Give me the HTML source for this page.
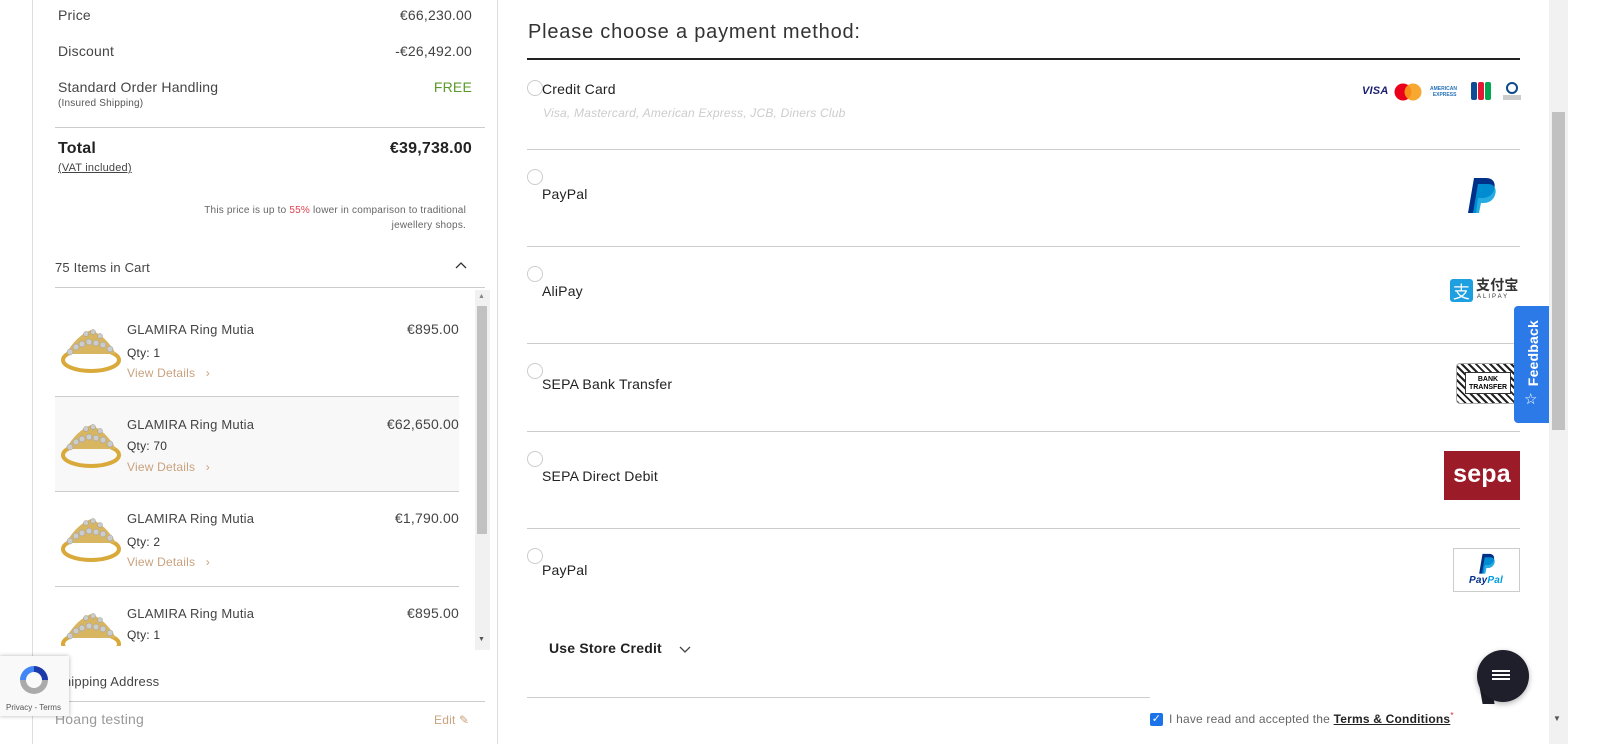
<!DOCTYPE html>
<html><head><meta charset="utf-8"><style>
*{margin:0;padding:0;box-sizing:border-box}
body{width:1600px;height:744px;overflow:hidden;background:#fff;font-family:"Liberation Sans",sans-serif;color:#333;position:relative;letter-spacing:.2px}
.a{position:absolute;white-space:nowrap}
.hl{position:absolute;height:1px;background:#ccc}
.r{text-align:right}
.radio{position:absolute;width:16px;height:16px;border:1px solid #ccc;border-radius:50%;background:#fff}
.ring{position:absolute;width:62px;height:56px}
</style></head><body>
<div class="a" style="left:32px;top:0;width:1px;height:744px;background:#ddd"></div>
<div class="a" style="left:497px;top:0;width:1px;height:744px;background:#ddd"></div>

<div class="a" style="left:58px;top:7px;font-size:14px;color:#444">Price</div>
<div class="a r" style="right:1128px;top:7px;font-size:14px;color:#444">€66,230.00</div>
<div class="a" style="left:58px;top:43px;font-size:14px;color:#444">Discount</div>
<div class="a r" style="right:1128px;top:43px;font-size:14px;color:#444">-€26,492.00</div>
<div class="a" style="left:58px;top:79px;font-size:14px;color:#444">Standard Order Handling</div>
<div class="a" style="left:58px;top:98px;font-size:10px;color:#555">(Insured Shipping)</div>
<div class="a r" style="right:1128px;top:79px;font-size:14px;color:#5a9a2a">FREE</div>
<div class="hl" style="left:55px;top:127px;width:430px"></div>
<div class="a" style="left:58px;top:140px;font-size:16px;font-weight:bold;color:#222">Total</div>
<div class="a r" style="right:1128px;top:140px;font-size:16px;font-weight:bold;color:#222">€39,738.00</div>
<div class="a" style="left:58px;top:162px;font-size:11px;color:#444;text-decoration:underline">(VAT included)</div>
<div class="a r" style="right:1134px;top:203px;font-size:10px;color:#666;line-height:15px;text-align:right">This price is up to <span style="color:#e04050">55%</span> lower in comparison to traditional<br>jewellery shops.</div>
<div class="a" style="left:55px;top:260px;font-size:13px;color:#444">75 Items in Cart</div>
<svg class="a" style="left:455px;top:262px" width="12" height="8"><path d="M1 6 L6 1 L11 6" stroke="#333" stroke-width="1.3" fill="none"/></svg>
<div class="hl" style="left:55px;top:287px;width:430px"></div>

<div class="a" style="left:475px;top:290px;width:15px;height:360px;background:#f1f1f1"></div>
<div class="a" style="left:477px;top:306px;width:10px;height:228px;background:#c1c1c1"></div>
<div class="a" style="left:478px;top:293px;font-size:7px;color:#888">▲</div>
<div class="a" style="left:478px;top:636px;font-size:7px;color:#555">▼</div>
<div class="a" style="left:55px;top:397px;width:404px;height:94px;background:#f8f8f8"></div>
<div class="hl" style="left:55px;top:396px;width:404px"></div>
<div class="hl" style="left:55px;top:491px;width:404px"></div>
<div class="hl" style="left:55px;top:586px;width:404px"></div>

<svg width="0" height="0" style="position:absolute"><defs><g id="rg">
<ellipse cx="31" cy="40" rx="28" ry="11" fill="none" stroke="#d9a93a" stroke-width="4"/>
<path d="M6 34 Q16 16 31 10 Q46 16 56 34 Z" fill="#d8b560"/>
<g fill="#ccc" stroke="#999" stroke-width=".5"><circle cx="10" cy="32" r="3"/><circle cx="16" cy="27" r="3"/><circle cx="22" cy="24" r="3"/><circle cx="29" cy="22" r="3"/><circle cx="36" cy="23" r="3"/><circle cx="43" cy="25" r="3"/><circle cx="50" cy="29" r="3"/><circle cx="26" cy="14" r="2.5"/><circle cx="33" cy="12" r="2.5"/><circle cx="40" cy="16" r="2.5"/></g>
</g></defs></svg>
<svg class="ring" style="left:60px;top:320px"><use href="#rg"/></svg>
<svg class="ring" style="left:60px;top:415px"><use href="#rg"/></svg>
<svg class="ring" style="left:60px;top:509px"><use href="#rg"/></svg>
<svg class="ring" style="left:60px;top:604px;height:42px"><use href="#rg"/></svg>

<div class="a" style="left:127px;top:322px;font-size:13px;color:#444">GLAMIRA Ring Mutia</div>
<div class="a r" style="right:1141px;top:321px;font-size:14px;color:#444">€895.00</div>
<div class="a" style="left:127px;top:346px;font-size:12px;color:#333">Qty: 1</div>
<div class="a" style="left:127px;top:366px;font-size:12px;color:#c9a27e">View Details &nbsp;&nbsp;›</div>

<div class="a" style="left:127px;top:417px;font-size:13px;color:#444">GLAMIRA Ring Mutia</div>
<div class="a r" style="right:1141px;top:416px;font-size:14px;color:#444">€62,650.00</div>
<div class="a" style="left:127px;top:439px;font-size:12px;color:#333">Qty: 70</div>
<div class="a" style="left:127px;top:460px;font-size:12px;color:#c9a27e">View Details &nbsp;&nbsp;›</div>

<div class="a" style="left:127px;top:511px;font-size:13px;color:#444">GLAMIRA Ring Mutia</div>
<div class="a r" style="right:1141px;top:510px;font-size:14px;color:#444">€1,790.00</div>
<div class="a" style="left:127px;top:535px;font-size:12px;color:#333">Qty: 2</div>
<div class="a" style="left:127px;top:555px;font-size:12px;color:#c9a27e">View Details &nbsp;&nbsp;›</div>

<div class="a" style="left:127px;top:606px;font-size:13px;color:#444">GLAMIRA Ring Mutia</div>
<div class="a r" style="right:1141px;top:605px;font-size:14px;color:#444">€895.00</div>
<div class="a" style="left:127px;top:628px;font-size:12px;color:#333">Qty: 1</div>

<div class="a" style="left:55px;top:674px;font-size:13px;color:#444">Shipping Address</div>
<div class="hl" style="left:55px;top:701px;width:430px"></div>
<div class="a" style="left:55px;top:711px;font-size:14px;color:#999">Hoang testing</div>
<div class="a" style="left:434px;top:713px;font-size:12px;color:#c9a27e">Edit ✎</div>

<div class="a" style="left:0;top:656px;width:69px;height:60px;background:#f9f9f9;box-shadow:0 0 4px rgba(0,0,0,.3)">
<svg style="position:absolute;left:16px;top:6px" width="36" height="36" viewBox="0 0 36 36"><path d="M18 4 A14 14 0 0 1 32 18 L26 18 A8 8 0 0 0 18 10Z" fill="#1c3aa9"/><path d="M4 18 A14 14 0 0 1 18 4 L18 10 A8 8 0 0 0 10 18Z" fill="#4285f4"/><path d="M18 32 A14 14 0 0 1 4 18 L10 18 A8 8 0 0 0 18 26Z" fill="#aaa"/><path d="M32 18 A14 14 0 0 1 18 32 L18 26 A8 8 0 0 0 26 18Z" fill="#ababab"/></svg>
<div style="position:absolute;left:6px;top:47px;font-size:8px;color:#555;letter-spacing:0">Privacy - Terms</div></div>

<div class="a" style="left:528px;top:21px;font-size:20px;color:#333;letter-spacing:.8px">Please choose a payment method:</div>
<div class="a" style="left:527px;top:58px;width:993px;height:2px;background:#222"></div>

<div class="radio" style="left:527px;top:80px"></div>
<div class="a" style="left:542px;top:81px;font-size:14px;color:#222">Credit Card</div>
<div class="a" style="left:543px;top:106px;font-size:12px;color:#ccc;font-style:italic">Visa, Mastercard, American Express, JCB, Diners Club</div>
<div class="a" style="left:1362px;top:85px;font-size:11px;font-weight:bold;font-style:italic;color:#1a1f71">VISA</div>
<svg class="a" style="left:1394px;top:83px" width="28" height="18"><circle cx="9" cy="9" r="8.5" fill="#eb001b"/><circle cx="19" cy="9" r="8.5" fill="#f79e1b" opacity=".9"/></svg>
<div class="a" style="left:1430px;top:86px;font-size:5px;color:#2671b9;line-height:6px;font-weight:bold;letter-spacing:0">AMERICAN<br>&nbsp;&nbsp;EXPRESS</div>
<svg class="a" style="left:1471px;top:82px" width="20" height="18"><rect x="0" y="0" width="6" height="18" rx="2" fill="#0e4c96"/><rect x="7" y="0" width="6" height="18" rx="2" fill="#e21836"/><rect x="14" y="0" width="6" height="18" rx="2" fill="#00a650"/></svg>
<svg class="a" style="left:1503px;top:82px" width="18" height="20"><circle cx="9" cy="6" r="5" fill="none" stroke="#0a4a8c" stroke-width="2"/><rect x="0" y="13" width="18" height="5" fill="#ccc"/></svg>
<div class="hl" style="left:527px;top:149px;width:993px"></div>

<div class="radio" style="left:527px;top:169px"></div>
<div class="a" style="left:542px;top:186px;font-size:14px;color:#222">PayPal</div>
<svg class="a" style="left:1466px;top:178px" width="32" height="36" viewBox="0 0 32 36"><path d="M8 0 H20 C28 0 30 6 28 12 C26 18 21 20 16 20 H12 L10 35 H2Z" fill="#003087"/><path d="M12 6 H22 C29 6 31 12 29 17 C27 23 22 25 18 25 H15 L13 35 H7Z" fill="#009cde" opacity=".85"/></svg>
<div class="hl" style="left:527px;top:246px;width:993px"></div>

<div class="radio" style="left:527px;top:266px"></div>
<div class="a" style="left:542px;top:283px;font-size:14px;color:#222">AliPay</div>
<div class="a" style="left:1450px;top:279px;width:23px;height:23px;background:#1e9fe0;border-radius:3px;color:#fff;font-size:17px;text-align:center;line-height:23px;font-family:'Noto Sans CJK SC',sans-serif">支</div>
<div class="a" style="left:1476px;top:277px;font-size:14px;font-weight:bold;color:#333;font-family:'Noto Sans CJK SC',sans-serif;line-height:16px">支付宝</div>
<div class="a" style="left:1477px;top:294px;font-size:6px;color:#333;letter-spacing:2px">ALIPAY</div>
<div class="hl" style="left:527px;top:343px;width:993px"></div>

<div class="radio" style="left:527px;top:363px"></div>
<div class="a" style="left:542px;top:376px;font-size:14px;color:#222">SEPA Bank Transfer</div>
<div class="a" style="left:1456px;top:363px;width:64px;height:41px;border:1px solid #aaa;border-radius:4px;background:repeating-linear-gradient(45deg,#222 0 2px,#fff 2px 5px)"><div style="position:absolute;left:8px;top:8px;width:46px;height:22px;background:#fff;border:1px solid #333;font-size:7px;font-weight:bold;text-align:center;line-height:8px;padding-top:3px;color:#000;letter-spacing:0">BANK<br>TRANSFER</div></div>
<div class="hl" style="left:527px;top:431px;width:993px"></div>

<div class="radio" style="left:527px;top:451px"></div>
<div class="a" style="left:542px;top:468px;font-size:14px;color:#222">SEPA Direct Debit</div>
<div class="a" style="left:1444px;top:451px;width:76px;height:49px;background:#9b1b28;color:#fff;font-size:25px;font-weight:bold;text-align:center;line-height:46px">sepa</div>
<div class="hl" style="left:527px;top:528px;width:993px"></div>

<div class="radio" style="left:527px;top:548px"></div>
<div class="a" style="left:542px;top:562px;font-size:14px;color:#222">PayPal</div>
<div class="a" style="left:1453px;top:548px;width:67px;height:44px;border:1px solid #ccc;background:#fff">
<svg style="position:absolute;left:24px;top:4px" width="18" height="22" viewBox="0 0 32 36"><path d="M8 0 H20 C28 0 30 6 28 12 C26 18 21 20 16 20 H12 L10 35 H2Z" fill="#003087"/><path d="M12 6 H22 C29 6 31 12 29 17 C27 23 22 25 18 25 H15 L13 35 H7Z" fill="#009cde" opacity=".85"/></svg>
<div style="position:absolute;left:15px;top:26px;font-size:10px;font-weight:bold;font-style:italic;color:#003087">Pay<span style="color:#009cde">Pal</span></div></div>

<div class="a" style="left:549px;top:640px;font-size:14px;font-weight:bold;color:#222">Use Store Credit</div>
<svg class="a" style="left:679px;top:646px" width="12" height="8"><path d="M1 1 L6 6 L11 1" stroke="#444" stroke-width="1.3" fill="none"/></svg>
<div class="hl" style="left:527px;top:697px;width:623px"></div>

<div class="a" style="left:1150px;top:713px;width:13px;height:13px;background:#1a73e8;border-radius:2px;color:#fff;font-size:11px;line-height:13px;text-align:center">✓</div>
<div class="a" style="left:1169px;top:711px;font-size:12px;color:#666">I have read and accepted the <span style="color:#222;text-decoration:underline;font-weight:bold">Terms &amp; Conditions</span><sup style="color:#e02020;font-size:8px">*</sup></div>

<div class="a" style="left:1481px;top:686px;width:12px;height:18px;background:#1f1f2b;transform:skewX(10deg)"></div>
<div class="a" style="left:1477px;top:650px;width:52px;height:52px;border-radius:50%;background:#1f1f2b;box-shadow:0 2px 6px rgba(0,0,0,.3)"></div>
<div class="a" style="left:1492px;top:670px;width:18px;height:2px;background:#fff;box-shadow:-0px 4px 0 #fff,0 8px 0 #fff"></div>

<div class="a" style="left:1514px;top:306px;width:38px;height:117px;background:#2b7ae8;border-radius:4px 0 0 4px"></div>
<div class="a" style="left:1524px;top:320px;font-size:14px;font-weight:bold;color:#fff;writing-mode:vertical-rl;transform:rotate(180deg);line-height:18px">Feedback</div>
<div class="a" style="left:1524px;top:390px;color:#fff;font-size:15px">☆</div>

<div class="a" style="left:1549px;top:0;width:19px;height:744px;background:#f1f1f1"></div>
<div class="a" style="left:1552px;top:112px;width:13px;height:318px;background:#c1c1c1"></div>
<div class="a" style="left:1553px;top:714px;font-size:8px;color:#555">▼</div>
</body></html>
